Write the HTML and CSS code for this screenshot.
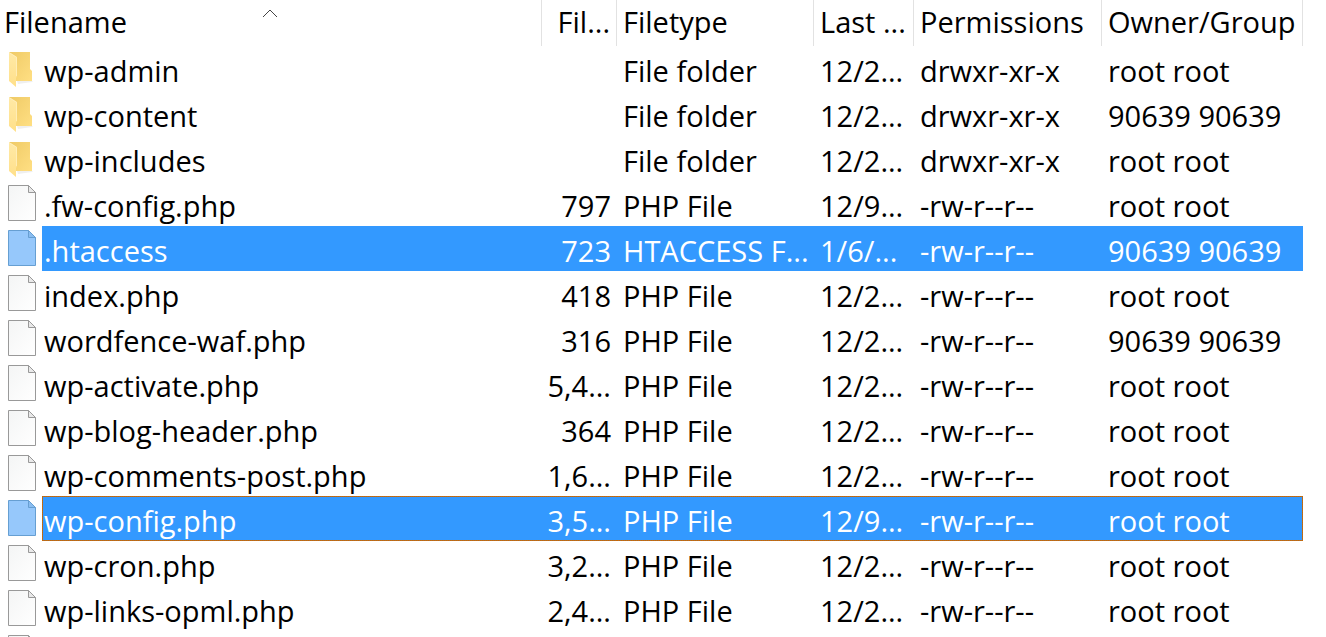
FILE: index.html
```
<!DOCTYPE html>
<html lang="en">
<head>
<meta charset="utf-8">
<title>Remote files</title>
<link rel="stylesheet" href="styles.css">
</head>
<body>
<svg class="defs" aria-hidden="true">
  <defs>
    <linearGradient id="paper" x1="0" y1="0" x2="1" y2="1"><stop offset="0" stop-color="#f4f5f5"/><stop offset="1" stop-color="#ffffff"/></linearGradient>
    <linearGradient id="back" x1="0" y1="0" x2="1" y2="1"><stop offset="0" stop-color="#efca66"/><stop offset="1" stop-color="#ffdf83"/></linearGradient>
    <linearGradient id="flap" x1="0" y1="0" x2="0" y2="1"><stop offset="0" stop-color="#ffe9a6"/><stop offset="1" stop-color="#ffe08a"/></linearGradient>
    <symbol id="file" viewBox="0 0 28 36">
      <path class="sheet" d="M.5.5h20l7 7v28H.5z"/>
      <path class="fold" d="M20.5.5v7h7z"/>
    </symbol>
    <symbol id="folder" viewBox="0 0 28 36">
      <path d="M9 29h16l-1 1-14 2z" fill="#efefef"/>
      <path d="M1 0h21v17l2 2v10H1z" fill="url(#back)"/>
      <path d="M1 0l8 5v19l-1 2v9l-7-6z" fill="url(#flap)"/>
      <path d="M1 .5l7.500 4.800V24" fill="none" stroke="#fff1c4" stroke-width=".7"/>
    </symbol>
  </defs>
</svg>
<main class="list">
<table class="files">
  <colgroup><col class="c-icon"><col><col class="c-size"><col class="c-type"><col class="c-date"><col class="c-perm"><col class="c-owner"></colgroup>
  <thead>
    <tr>
      <th colspan="2" class="sorted" aria-sort="ascending"><button type="button">Filename</button><svg class="caret" viewBox="0 0 16 9" aria-hidden="true"><path d="M1 8l7-7 7 7"/></svg></th>
      <th class="size"><button type="button">Fil...</button></th>
      <th><button type="button">Filetype</button></th>
      <th><button type="button">Last ...</button></th>
      <th><button type="button">Permissions</button></th>
      <th><button type="button">Owner/Group</button></th>
    </tr>
  </thead>
  <tbody>
    <tr><td class="icon folder"><svg><use href="#folder"/></svg></td><td class="name">wp-admin</td><td class="size"></td><td>File folder</td><td>12/2...</td><td>drwxr-xr-x</td><td>root root</td></tr>
    <tr><td class="icon folder"><svg><use href="#folder"/></svg></td><td class="name">wp-content</td><td class="size"></td><td>File folder</td><td>12/2...</td><td>drwxr-xr-x</td><td>90639 90639</td></tr>
    <tr><td class="icon folder"><svg><use href="#folder"/></svg></td><td class="name">wp-includes</td><td class="size"></td><td>File folder</td><td>12/2...</td><td>drwxr-xr-x</td><td>root root</td></tr>
    <tr><td class="icon"><svg><use href="#file"/></svg></td><td class="name">.fw-config.php</td><td class="size">797</td><td>PHP File</td><td>12/9...</td><td>-rw-r--r--</td><td>root root</td></tr>
    <tr class="selected"><td class="icon"><svg><use href="#file"/></svg></td><td class="name">.htaccess</td><td class="size">723</td><td>HTACCESS F...</td><td>1/6/...</td><td>-rw-r--r--</td><td>90639 90639</td></tr>
    <tr><td class="icon"><svg><use href="#file"/></svg></td><td class="name">index.php</td><td class="size">418</td><td>PHP File</td><td>12/2...</td><td>-rw-r--r--</td><td>root root</td></tr>
    <tr><td class="icon"><svg><use href="#file"/></svg></td><td class="name">wordfence-waf.php</td><td class="size">316</td><td>PHP File</td><td>12/2...</td><td>-rw-r--r--</td><td>90639 90639</td></tr>
    <tr><td class="icon"><svg><use href="#file"/></svg></td><td class="name">wp-activate.php</td><td class="size">5,4...</td><td>PHP File</td><td>12/2...</td><td>-rw-r--r--</td><td>root root</td></tr>
    <tr><td class="icon"><svg><use href="#file"/></svg></td><td class="name">wp-blog-header.php</td><td class="size">364</td><td>PHP File</td><td>12/2...</td><td>-rw-r--r--</td><td>root root</td></tr>
    <tr><td class="icon"><svg><use href="#file"/></svg></td><td class="name">wp-comments-post.php</td><td class="size">1,6...</td><td>PHP File</td><td>12/2...</td><td>-rw-r--r--</td><td>root root</td></tr>
    <tr class="selected focused"><td class="icon"><svg><use href="#file"/></svg></td><td class="name">wp-config.php</td><td class="size">3,5...</td><td>PHP File</td><td>12/9...</td><td>-rw-r--r--</td><td>root root</td></tr>
    <tr><td class="icon"><svg><use href="#file"/></svg></td><td class="name">wp-cron.php</td><td class="size">3,2...</td><td>PHP File</td><td>12/2...</td><td>-rw-r--r--</td><td>root root</td></tr>
    <tr><td class="icon"><svg><use href="#file"/></svg></td><td class="name">wp-links-opml.php</td><td class="size">2,4...</td><td>PHP File</td><td>12/2...</td><td>-rw-r--r--</td><td>root root</td></tr>
    <tr><td class="icon"><svg><use href="#file"/></svg></td><td class="name"></td><td class="size"></td><td></td><td></td><td></td><td></td></tr>
  </tbody>
</table>
</main>
</body>
</html>
```
FILE: styles.css
```
* { box-sizing: border-box; }
body {
  margin: 0;
  background: #fff;
  color: #000;
  font: 29px/40px "Open Sans", "Noto Sans", sans-serif;
}
.defs { position: absolute; width: 0; height: 0; }
.list {
  height: 100vh;
  padding-right: 23px;
  overflow: hidden;
}
.files {
  width: 100%;
  table-layout: fixed;
  border-spacing: 0;
  white-space: nowrap;
}
.c-icon { width: 42px; }
.c-size { width: 75px; }
.c-type { width: 197px; }
.c-date { width: 100px; }
.c-perm { width: 188px; }
.c-owner { width: 201px; }

th {
  height: 46px;
  padding: 0 0 2px 6px;
  border-right: 1px solid #e2e2e2;
  font-weight: 400;
  text-align: left;
}
th button {
  display: block;
  width: 100%;
  padding: 0;
  border: 0;
  background: none;
  color: inherit;
  font: inherit;
  text-align: inherit;
}
th.sorted { position: relative; padding-left: 4px; }
.caret {
  position: absolute;
  top: 9px;
  left: calc(50% - 9px);
  width: 16px;
  height: 9px;
  fill: none;
  stroke: #444;
}

td { height: 45px; padding: 4px 0 0 6px; line-height: 40px; }
th.size, td.size { padding-left: 0; padding-right: 6px; text-align: right; }
td.name { padding-left: 2px; }
td.icon { padding: 4px 0 0 8px; vertical-align: top; }
td.folder { padding-top: 6px; }
.icon svg { display: block; width: 28px; height: 36px; }
.icon {
  --sheet: url(#paper);
  --fold: #e9e9e9;
  --edge: #999;
}
.selected .icon {
  --sheet: #96c8fb;
  --fold: #8abdf0;
  --edge: #669fd2;
}
.sheet { fill: var(--sheet); stroke: var(--edge); }
.fold { fill: var(--fold); stroke: var(--edge); }

.selected td:not(.icon) { background-color: #3399ff; color: #fff; }

/* One-pixel dotted focus rectangle, drawn along the outer edges of the row. */
.focused td:not(.icon) {
  --dots-x: repeating-linear-gradient(90deg, #cc6600 0 1px, #a66f33 1px 2px);
  --dots-y: repeating-linear-gradient(#cc6600 0 1px, #a66f33 1px 2px);
  background-image: var(--dots-x), var(--dots-x);
  background-position: top, bottom;
  background-size: 100% 1px;
  background-repeat: no-repeat;
}
.focused td.name {
  background-image: var(--dots-x), var(--dots-x), var(--dots-y);
  background-position: top, bottom, left;
  background-size: 100% 1px, 100% 1px, 1px 100%;
}
.focused td:last-child:not(.icon) {
  background-image: var(--dots-x), var(--dots-x), var(--dots-y);
  background-position: top, bottom, right;
  background-size: 100% 1px, 100% 1px, 1px 100%;
}
```
